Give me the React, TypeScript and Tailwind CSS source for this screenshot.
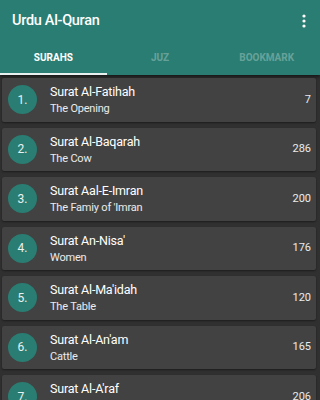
import { useState } from "react";

const surahs = [
  { n: 1, name: "Surat Al-Fatihah", en: "The Opening", ayat: 7 },
  { n: 2, name: "Surat Al-Baqarah", en: "The Cow", ayat: 286 },
  { n: 3, name: "Surat Aal-E-Imran", en: "The Famiy of 'Imran", ayat: 200 },
  { n: 4, name: "Surat An-Nisa'", en: "Women", ayat: 176 },
  { n: 5, name: "Surat Al-Ma'idah", en: "The Table", ayat: 120 },
  { n: 6, name: "Surat Al-An'am", en: "Cattle", ayat: 165 },
  { n: 7, name: "Surat Al-A'raf", en: "The Heights", ayat: 206 },
];

const tabs = ["SURAHS", "JUZ", "BOOKMARK"];

export default function App() {
  const [tab, setTab] = useState(0);

  return (
    <div className="h-[400px] w-full overflow-hidden bg-[#303030] font-['Roboto',sans-serif]">
      <header className="bg-[#2a7d72] shadow-[0_2px_3px_rgba(0,0,0,0.5)]">
        <div className="flex h-[41px] items-center justify-between pl-3 pr-[14px]">
          <h1 className="text-[14.5px] font-medium tracking-[-0.3px] text-white">Urdu Al-Quran</h1>
          <svg width="4" height="14" viewBox="0 0 4 14" className="fill-white">
            <circle cx="2" cy="2" r="1.6" />
            <circle cx="2" cy="7" r="1.6" />
            <circle cx="2" cy="12" r="1.6" />
          </svg>
        </div>
        <div className="flex h-[34px]">
          {tabs.map((t, i) => (
            <button
              key={t}
              onClick={() => setTab(i)}
              className={`relative flex flex-1 items-center justify-center pb-[2px] text-[10px] font-bold ${
                tab === i ? "text-white" : "text-white/30"
              }`}
            >
              {t}
              {tab === i && <span className="absolute bottom-0 left-0 right-0 h-[2px] bg-[#e8f0ef]" />}
            </button>
          ))}
        </div>
      </header>

      <ul className="flex flex-col gap-[6px] pl-[2px] pr-[4px] pt-[3px]">
        {surahs.map((s) => (
          <li
            key={s.n}
            className="flex h-[43.5px] shrink-0 items-center rounded-[2px] bg-[#424242] pl-[6px] pr-[5px] shadow-[0_1px_2px_rgba(0,0,0,0.4)]"
          >
            <div className="flex h-[29px] w-[29px] shrink-0 items-center justify-center rounded-full bg-[#2a7d72] text-[12px] text-white/90">
              {s.n}.
            </div>
            <div className="ml-[13px] flex min-w-0 flex-1 flex-col">
              <span className="text-[12.5px] leading-[15px] tracking-[-0.2px] text-white">{s.name}</span>
              <span className="mt-[3px] text-[11px] leading-[13px] tracking-[-0.2px] text-white/90">{s.en}</span>
            </div>
            <span className="text-[11px] text-white/90">{s.ayat}</span>
          </li>
        ))}
      </ul>
    </div>
  );
}
